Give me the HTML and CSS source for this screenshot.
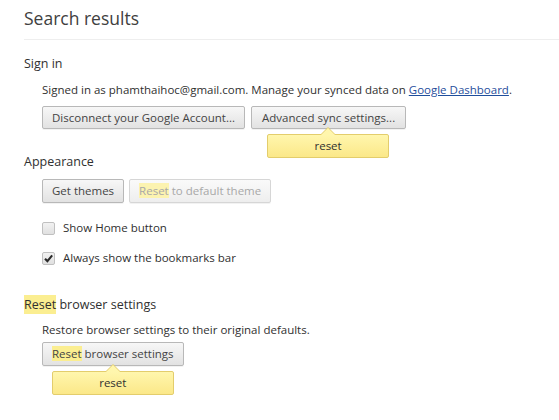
FILE: index.html
```html
<!DOCTYPE html>
<html>
<head>
<meta charset="utf-8">
<link rel="stylesheet" href="styles.css">
</head>
<body>
<div class="page">
  <header class="page-header">
    <h1 class="page-title">Search results</h1>
  </header>

  <section class="section">
    <h3 class="section-title">Sign in</h3>
    <div class="section-body">
      <div class="desc">Signed in as phamthaihoc@gmail.com. Manage your synced data on <a class="link" href="#">Google Dashboard</a>.</div>
      <div class="btn-row">
        <button class="btn">Disconnect your Google Account...</button>
        <div class="btn-wrap">
          <button class="btn btn-wide">Advanced sync settings...</button>
          <div class="bubble">reset</div>
        </div>
      </div>
    </div>
  </section>

  <section class="section section-appearance">
    <h3 class="section-title">Appearance</h3>
    <div class="section-body">
      <div class="btn-row">
        <button class="btn">Get themes</button>
        <button class="btn btn-disabled" disabled><span class="hl">Reset</span> to default theme</button>
      </div>
      <label class="check-row"><span class="check"></span>Show Home button</label>
      <label class="check-row"><span class="check checked"><svg viewBox="0 0 12 12" width="11" height="11"><path d="M2.2 6.2 L4.8 8.8 L10 2.6" fill="none" stroke="#2a2a2a" stroke-width="2.3"/></svg></span>Always show the bookmarks bar</label>
    </div>
  </section>

  <section class="section section-reset">
    <h3 class="section-title"><span class="hl">Reset</span> browser settings</h3>
    <div class="section-body">
      <div class="desc">Restore browser settings to their original defaults.</div>
      <div class="btn-row">
        <div class="btn-wrap">
          <button class="btn"><span class="hl">Reset</span> browser settings</button>
          <div class="bubble">reset</div>
        </div>
      </div>
    </div>
  </section>
</div>
</body>
</html>
```

FILE: styles.css
```css
html, body {
  margin: 0;
  padding: 0;
  background: #ffffff;
}
body {
  font-family: "Open Sans", "DejaVu Sans", sans-serif;
  font-size: 11.5px;
  color: #303030;
  min-height: 420px;
}
.page {
  padding: 0 0 40px 24px;
}
.page-header {
  border-bottom: 1px solid #eeeeee;
  padding-top: 5px;
  height: 34px;
}
.page-title {
  margin: 0;
  font-weight: normal;
  font-size: 17.5px;
  line-height: 26px;
  color: #404040;
}
.section {
  margin-top: 15px;
}
.section-title {
  margin: 0;
  font-weight: normal;
  font-size: 12.5px;
  line-height: 18px;
  color: #303030;
}
.section-body {
  padding-left: 18px;
}
.desc {
  margin-top: 9px;
  line-height: 16px;
  color: #303030;
}
.link {
  color: #1f4e9c;
  text-decoration: underline;
}
.btn-row {
  display: flex;
  gap: 5px;
  margin-top: 8px;
}
.btn-wrap {
  position: relative;
}
.btn {
  font-family: inherit;
  font-size: 11.5px;
  color: #444444;
  height: 23px;
  padding: 0 9px;
  border: 1px solid #b8b8b8;
  border-radius: 2px;
  background: linear-gradient(#f7f7f7, #e2e2e2);
  box-shadow: 0 1px 0 rgba(0,0,0,0.05);
  line-height: 20px;
  margin: 0;
}
.btn-wide {
  padding: 0 10px;
  margin-left: 1px;
}
.btn-disabled {
  color: #a8a8a8;
  border-color: #d6d6d6;
  background: linear-gradient(#fafafa, #eeeeee);
}
.hl {
  background: #fbee91;
}
.btn-disabled .hl {
  background: #fcf3b0;
}
.section-appearance {
  margin-top: 24px;
}
.section-appearance .btn-row {
  margin-top: 8px;
}
.section-appearance .btn {
  height: 24px;
}
.check-row {
  display: flex;
  align-items: center;
  line-height: 16px;
  color: #303030;
}
.section-appearance .btn-row + .check-row {
  margin-top: 17px;
}
.check-row + .check-row {
  margin-top: 14px;
}
.check {
  width: 11px;
  height: 11px;
  border: 1px solid #c0c0c0;
  border-radius: 2px;
  background: linear-gradient(#f2f2f2, #e0e0e0);
  margin-right: 8px;
  display: flex;
  align-items: center;
  justify-content: center;
}
.section-reset {
  margin-top: 30px;
}
.section-reset .section-title .hl {
  padding: 1px 0;
}
.section-reset .desc {
  margin-top: 8px;
}
.section-reset .btn-row {
  margin-top: 4px;
}
.section-reset .btn {
  height: 24px;
}
.bubble {
  position: absolute;
  top: 100%;
  left: 50%;
  transform: translateX(-50%);
  width: 120px;
  margin-top: 5px;
  height: 22px;
  line-height: 22px;
  text-align: center;
  border: 1px solid #e3cd6c;
  border-radius: 2px;
  background: linear-gradient(#fff6ad, #fbe889);
  color: #303030;
  font-size: 11.5px;
}
.bubble::before,
.bubble::after {
  content: "";
  position: absolute;
  left: 50%;
  width: 0;
  height: 0;
  border-style: solid;
}
.bubble::before {
  top: -8px;
  margin-left: -8px;
  border-width: 0 8px 8px 8px;
  border-color: transparent transparent #e3cd6c transparent;
}
.bubble::after {
  top: -7px;
  margin-left: -7px;
  border-width: 0 7px 7px 7px;
  border-color: transparent transparent #fff6ad transparent;
}
```
